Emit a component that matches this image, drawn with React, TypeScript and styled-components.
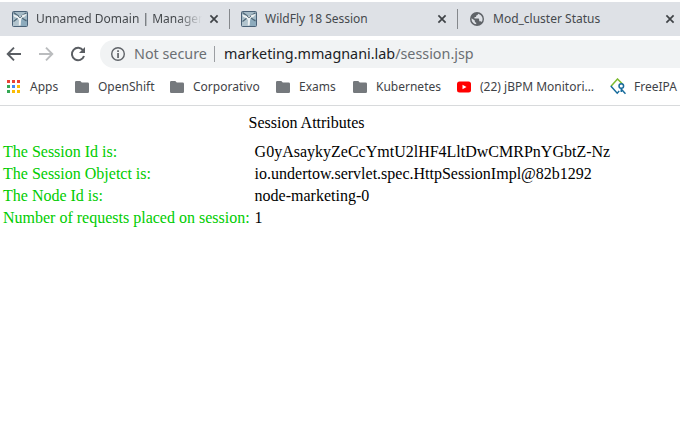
import React from 'react';
import styled, { createGlobalStyle } from 'styled-components';

const GlobalStyle = createGlobalStyle`
  * { box-sizing: border-box; }
  body { margin: 0; background: #fff; overflow: hidden; }
  svg { display: block; flex: none; }
`;

const Browser = styled.div`
  width: 680px;
  height: 436px;
  padding-top: 2px;
  overflow: hidden;
  background: #fff;
  font-family: 'Noto Sans', sans-serif;
`;

const TabStrip = styled.div`
  display: flex;
  height: 34px;
  overflow: hidden;
  background: #dee1e6;
`;

const Tab = styled.div<{ $first?: boolean }>`
  display: flex;
  flex: none;
  align-items: center;
  width: ${(p) => (p.$first ? 230 : 228)}px;
  padding-left: ${(p) => (p.$first ? 12 : 11)}px;
`;

const TabDivider = styled.span`
  flex: none;
  width: 1px;
  height: 20px;
  margin-left: auto;
  background: #85888c;
`;

const TabTitle = styled.span<{ $faded?: boolean }>`
  flex: none;
  width: ${(p) => (p.$faded ? 167 : 166)}px;
  margin-left: 8px;
  overflow: hidden;
  white-space: nowrap;
  font-size: 12px;
  line-height: 18px;
  color: #45494d;
  mask-image: ${(p) => (p.$faded ? 'linear-gradient(to right, #000 142px, transparent 166px)' : 'none')};
`;

const TabClose = styled.span`
  margin-left: 5px;
`;

const Toolbar = styled.div`
  display: flex;
  align-items: center;
  height: 36px;
  padding-left: 6px;
`;

const NavButton = styled.span`
  display: flex;
  flex: none;
  width: 32px;
`;

const AddressBar = styled.div`
  display: flex;
  flex: none;
  align-items: center;
  width: 620px;
  height: 28px;
  margin-left: -2px;
  padding-left: 10px;
  border-radius: 14px 0 0 14px;
  background: #f1f3f4;
  font-size: 14.35px;
  line-height: 20px;
  white-space: nowrap;
  color: #6b6f73;
`;

const Security = styled.span`
  width: 80px;
  margin-left: 8px;
`;

const AddressDivider = styled.span`
  width: 1px;
  height: 16px;
  margin-right: 9px;
  background: #9b9ea2;
`;

const Host = styled.span`
  color: #202124;
`;

const Bookmarks = styled.div`
  display: flex;
  align-items: center;
  height: 34px;
  padding: 0 0 4px 6px;
  border-bottom: 1px solid #d8dadc;
`;

const Bookmark = styled.div<{ $width: number; $gap: number }>`
  display: flex;
  flex: none;
  align-items: center;
  gap: ${(p) => p.$gap}px;
  width: ${(p) => p.$width}px;
  font-size: 12px;
  line-height: 18px;
  white-space: nowrap;
  color: #3f4347;
`;

const Page = styled.main`
  padding: 5px 0;
  font: 16px/18px 'Liberation Serif', serif;
  color: #000;
`;

const SessionTable = styled.table`
  border-spacing: 2px;
  border-collapse: separate;

  td { padding: 1px; white-space: nowrap; }
  td + td { padding-left: 2px; }
`;

const Caption = styled.caption`
  padding: 3px 0 8px;
`;

const Label = styled.td`
  color: #00cc00;
`;

const WildFlyIcon = () => (
  <svg width="16" height="16" viewBox="0 0 16 16">
    <rect x=".5" y=".5" width="15" height="15" rx="1" fill="#a5bac6" stroke="#4a6177" />
    <path d="M1 8.5 5 7l2.2 1V15H1Z" fill="#b2c4ce" />
    <path d="M9 8h6v7H8Z" fill="#8dabbd" />
    <path d="m1.5 1.5 5 3.5M9.5 5l5-3.3M6 7 1.5 10.5M10 7l4.5 3" stroke="#4f6676" strokeWidth="1.2" />
    <path d="M1 3.5 6 5l2 .7 3-2 3.8-.6-1.9 2.5-3.3 1.2L9 10l-.3 4.5H6.8L7 9 5.2 7 2.5 6Z" fill="#edf1f2" />
    <path d="m6 5 2 1.8L10 5" stroke="#4b6070" strokeWidth=".9" fill="none" />
  </svg>
);

const GlobeIcon = () => (
  <svg width="16" height="16" viewBox="0 0 16 16">
    <circle cx="8" cy="8" r="7" fill="#5f6368" />
    <path d="M9.2 2.7c-.3 1.2-1.1 1.8-2.1 1.8v1.6H5.5v1.4h3.7c.8 0 1 .7 1 1.4v1.3h1.2c.6 0 1 .3 1.3.8 1.8-2.5 1.1-6.7-3.5-8.3ZM2.6 7.2c-.4 3 1.8 5.7 4.6 6.1v-1.6c-.9 0-1.4-.7-1.4-1.4v-.7L2.6 7.2Z" fill="#dee1e6" />
  </svg>
);

const CloseIcon = () => (
  <svg width="12" height="12" viewBox="0 0 12 12">
    <path d="m2.4 2.4 7.2 7.2m0-7.2L2.4 9.6" stroke="#3f4347" strokeWidth="1.7" />
  </svg>
);

const ArrowIcon = ({ forward = false }: { forward?: boolean }) => (
  <svg width="16" height="16" viewBox="0 0 16 16">
    <path
      d={forward ? 'M1 8h13M8 1.6 14.3 8 8 14.4' : 'M15 8H2M8 1.6 1.7 8 8 14.4'}
      fill="none"
      stroke={forward ? '#babcbe' : '#5a5e63'}
      strokeWidth="1.9"
    />
  </svg>
);

const ReloadIcon = () => (
  <svg width="16" height="16" viewBox="0 0 16 16">
    <path d="M13.2 4.5A6.2 6.2 0 1 0 14 10" fill="none" stroke="#5a5e63" strokeWidth="2" />
    <path d="M15 1v6H9Z" fill="#5a5e63" />
  </svg>
);

const InfoIcon = () => (
  <svg width="16" height="16" viewBox="0 0 16 16">
    <circle cx="8" cy="8" r="6.3" fill="none" stroke="#5f6368" strokeWidth="1.4" />
    <path d="M7.2 4.2h1.7v1.7H7.2zM7.2 7.1h1.7V12H7.2z" fill="#5f6368" />
  </svg>
);

const appColors = ['#ea4335', '#ea4335', '#ea4335', '#34a853', '#4285f4', '#fbbc05', '#34a853', '#fbbc05', '#fbbc05'];

const AppsIcon = () => (
  <svg width="15" height="15" viewBox="0 0 15 15">
    {appColors.map((color, i) => (
      <rect key={i} x={1 + (i % 3) * 5} y={1 + Math.floor(i / 3) * 5} width="3" height="3" fill={color} />
    ))}
  </svg>
);

const FolderIcon = () => (
  <svg width="14" height="12" viewBox="0 0 14 12">
    <path d="M1.3 0h4l1.5 1.6h5.9A1.3 1.3 0 0 1 14 3v7.7a1.3 1.3 0 0 1-1.3 1.3H1.3A1.3 1.3 0 0 1 0 10.7V1.3A1.3 1.3 0 0 1 1.3 0Z" fill="#75797d" />
  </svg>
);

const YouTubeIcon = () => (
  <svg width="14" height="12" viewBox="0 0 14 12">
    <rect y=".5" width="14" height="11" rx="2.5" fill="#f00" />
    <path d="m5.5 3.8 4 2.2-4 2.2Z" fill="#fff" />
  </svg>
);

const FreeIpaIcon = () => (
  <svg width="16" height="17" viewBox="0 0 16 17" fill="none" strokeWidth="1.5">
    <path d="M1 8.3 7.5 1l5 5" stroke="#7dbb32" />
    <path d="m.8 8 6.4 7.2 2-2.2" stroke="#176b9c" />
    <circle cx="11.3" cy="8" r="2.3" stroke="#176b9c" />
    <path d="M11.3 10v4M11.6 11.5l3.9 4.3" stroke="#176b9c" />
  </svg>
);

const tabs = [
  { title: 'Unnamed Domain | Management', icon: <WildFlyIcon />, faded: true },
  { title: 'WildFly 18 Session', icon: <WildFlyIcon /> },
  { title: 'Mod_cluster Status', icon: <GlobeIcon /> },
];

const bookmarks = [
  { title: 'Apps', width: 69, gap: 9, icon: <AppsIcon /> },
  { title: 'OpenShift', width: 95, gap: 9, icon: <FolderIcon /> },
  { title: 'Corporativo', width: 106, gap: 9, icon: <FolderIcon /> },
  { title: 'Exams', width: 77, gap: 9, icon: <FolderIcon /> },
  { title: 'Kubernetes', width: 104, gap: 9, icon: <FolderIcon /> },
  { title: '(22) jBPM Monitori…', width: 153, gap: 9, icon: <YouTubeIcon /> },
  { title: 'FreeIPA', width: 80, gap: 8, icon: <FreeIpaIcon /> },
];

const attributes = [
  ['The Session Id is:', 'G0yAsaykyZeCcYmtU2lHF4LltDwCMRPnYGbtZ-Nz'],
  ['The Session Objetct is:', 'io.undertow.servlet.spec.HttpSessionImpl@82b1292'],
  ['The Node Id is:', 'node-marketing-0'],
  ['Number of requests placed on session:', '1'],
];

export default function App() {
  return (
    <Browser>
      <GlobalStyle />
      <TabStrip>
        {tabs.map((tab, i) => (
          <Tab key={tab.title} $first={i === 0}>
            {tab.icon}
            <TabTitle $faded={tab.faded}>{tab.title}</TabTitle>
            <TabClose><CloseIcon /></TabClose>
            {i < 2 && <TabDivider />}
          </Tab>
        ))}
      </TabStrip>
      <Toolbar>
        <NavButton><ArrowIcon /></NavButton>
        <NavButton><ArrowIcon forward /></NavButton>
        <NavButton><ReloadIcon /></NavButton>
        <AddressBar>
          <InfoIcon />
          <Security>Not secure</Security>
          <AddressDivider />
          <Host>marketing.mmagnani.lab</Host>/session.jsp
        </AddressBar>
      </Toolbar>
      <Bookmarks>
        {bookmarks.map((item) => (
          <Bookmark key={item.title} $width={item.width} $gap={item.gap}>
            {item.icon}
            {item.title}
          </Bookmark>
        ))}
      </Bookmarks>
      <Page>
        <SessionTable>
          <Caption>Session Attributes</Caption>
          <tbody>
            {attributes.map(([label, value]) => (
              <tr key={label}>
                <Label>{label}</Label>
                <td>{value}</td>
              </tr>
            ))}
          </tbody>
        </SessionTable>
      </Page>
    </Browser>
  );
}
